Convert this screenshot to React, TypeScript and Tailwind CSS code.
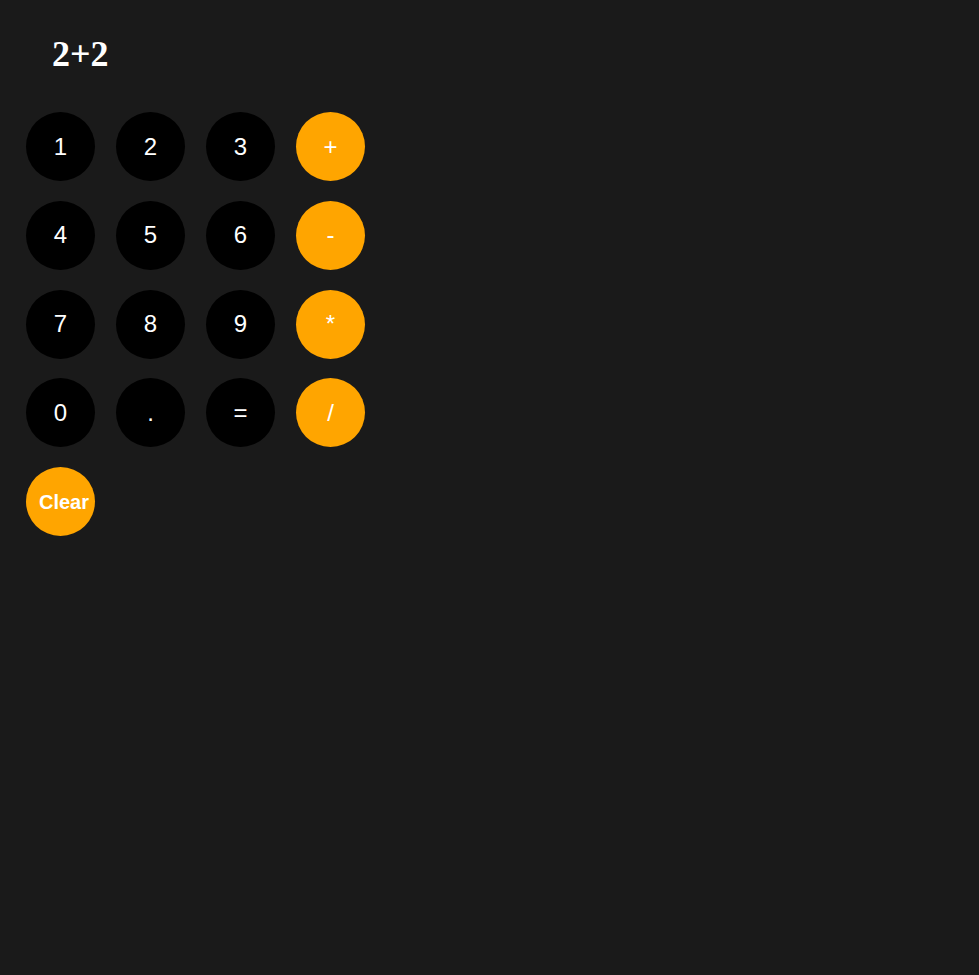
const keys = [
  "1", "2", "3", "+",
  "4", "5", "6", "-",
  "7", "8", "9", "*",
  "0", ".", "=", "/",
];

const ops = ["+", "-", "*", "/"];

export default function App() {
  return (
    <div className="min-h-screen bg-[#1a1a1a] px-[26px] pt-[36px] font-['Liberation_Sans',Arial,sans-serif]">
      <div className="pl-[26px] font-['Liberation_Serif',serif] text-[36px] font-bold leading-none text-white">
        2+2
      </div>
      <div className="mt-[40px] grid grid-cols-[repeat(4,69px)] gap-x-[21px] gap-y-[19.75px]">
        {keys.map((k) => (
          <button
            key={k}
            className={
              ops.includes(k)
                ? "flex h-[69px] w-[69px] items-center justify-center rounded-full bg-[#ffa500] text-[24px] text-white"
                : "flex h-[69px] w-[69px] items-center justify-center rounded-full bg-black text-[24px] text-white"
            }
          >
            {k}
          </button>
        ))}
        <button className="flex h-[69px] w-[69px] items-center justify-start whitespace-nowrap rounded-full bg-[#ffa500] pl-[13px] text-[20px] font-bold text-white">
          Clear
        </button>
      </div>
    </div>
  );
}
